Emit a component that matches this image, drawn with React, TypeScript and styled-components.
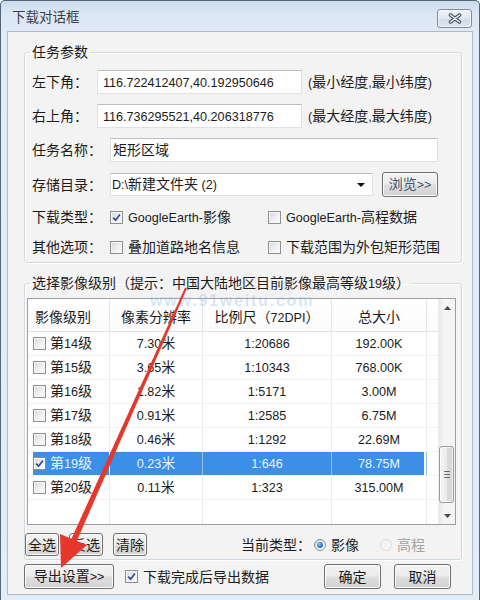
import React from 'react';
import styled, { createGlobalStyle } from 'styled-components';

const GlobalStyle = createGlobalStyle`
  html, body { margin: 0; padding: 0; background: #ffffff; }
  body {
    font-family: "Liberation Sans", "Noto Sans CJK SC", sans-serif;
    font-size: 14px;
    line-height: 18px;
    color: #1b1b1b;
  }
  *, *::before, *::after { box-sizing: border-box; }
`;

const LatinRun = styled.span`
  font-size: 0.9em;
`;

const MixedText = styled.span`
  white-space: pre;
`;

const Mixed: React.FC<{ text: string }> = ({ text }) => {
  const parts = text.split(/([\u0020-\u007e]+)/).filter((p) => p.length > 0);
  return (
    <MixedText>
      {parts.map((p, i) =>
        /^[\u0020-\u007e]+$/.test(p) ? (
          <LatinRun key={i}>{p}</LatinRun>
        ) : (
          <React.Fragment key={i}>{p}</React.Fragment>
        )
      )}
    </MixedText>
  );
};

/* ---------- window frame ---------- */

const Window = styled.div`
  position: relative;
  width: 480px;
  height: 600px;
  display: flex;
  flex-direction: column;
  padding: 0 6px 5px 6px;
  border: 1px solid #56667a;
  border-bottom: 0;
  border-radius: 5px 5px 0 0;
  background: linear-gradient(180deg, #cddcee 0px, #dce8f5 14px, #e1eaf5 30px, #e4ecf6 100%);
  overflow: hidden;
`;

const TitleBar = styled.div`
  height: 30px;
  flex: none;
  display: flex;
  align-items: flex-start;
  justify-content: space-between;
`;

const Title = styled.div`
  margin: 8px 0 0 5px;
  font-size: 13.5px;
  line-height: 18px;
  color: #3a3f47;
`;

const CloseButton = styled.div`
  width: 35px;
  height: 19px;
  margin: 8px 1px 0 0;
  display: flex;
  align-items: center;
  justify-content: center;
  border: 1px solid #7d8b9d;
  border-radius: 3px;
  background: linear-gradient(180deg, #eef3f9 0%, #dfe8f2 50%, #d0dce9 51%, #dce6f1 100%);
  box-shadow: inset 0 0 0 1px rgba(255, 255, 255, 0.6);
`;

const Client = styled.div`
  flex: 1;
  display: flex;
  flex-direction: column;
  border: 1px solid #aebdcd;
  background: #f3f3f3;
  padding: 0 10px 0 16px;
`;

/* ---------- group boxes ---------- */

const Group = styled.fieldset<{ $pad: string }>`
  margin: 11px 0 0 0;
  padding: ${(p) => p.$pad};
  border: 1px solid #d0dae2;
  border-radius: 3px;
  box-shadow: inset 1px 1px 0 #ffffff, 1px 1px 0 #ffffff;
  min-width: 0;
`;

const Legend = styled.legend<{ $ml: number }>`
  margin-left: ${(p) => p.$ml}px;
  padding: 0 2px;
  font-size: 14px;
  line-height: 18px;
  color: #1b1b1b;
  white-space: nowrap;
`;

const Rows = styled.div`
  display: flex;
  flex-direction: column;
  gap: 10px;
`;

const FieldRow = styled.div<{ $h: number }>`
  display: flex;
  align-items: center;
  height: ${(p) => p.$h}px;
`;

const Label = styled.div<{ $w: number }>`
  width: ${(p) => p.$w}px;
  flex: none;
  white-space: nowrap;
`;

const TextBox = styled.div<{ $w: number; $h: number; $pl: number }>`
  width: ${(p) => p.$w}px;
  height: ${(p) => p.$h}px;
  flex: none;
  display: flex;
  align-items: center;
  padding-left: ${(p) => p.$pl}px;
  background: #ffffff;
  border: 1px solid #dde2e8;
  border-top-color: #b9bec5;
  white-space: nowrap;
  overflow: hidden;
`;

const Hint = styled.div`
  margin-left: 6px;
  white-space: nowrap;
`;

const DropArrow = styled.span`
  margin-left: auto;
  margin-right: 7px;
  width: 0;
  height: 0;
  border-left: 4px solid transparent;
  border-right: 4px solid transparent;
  border-top: 4px solid #111;
`;

const Button = styled.div<{ $w: number; $h: number; $ml?: number; $tone?: string }>`
  width: ${(p) => p.$w}px;
  height: ${(p) => p.$h}px;
  margin-left: ${(p) => p.$ml ?? 0}px;
  flex: none;
  display: flex;
  align-items: center;
  justify-content: center;
  border: 1px solid #707070;
  border-radius: 3px;
  background: linear-gradient(180deg, #f4f4f4 0%, #ececec 48%, #dedede 52%, #d3d3d3 100%);
  box-shadow: inset 0 0 0 1px #fbfbfb;
  color: ${(p) => p.$tone ?? '#1b1b1b'};
  white-space: nowrap;
`;

const Option = styled.div<{ $w?: number; $ml?: number }>`
  display: flex;
  align-items: center;
  gap: 5px;
  width: ${(p) => (p.$w ? `${p.$w}px` : 'auto')};
  margin-left: ${(p) => p.$ml ?? 0}px;
  flex: none;
  white-space: nowrap;
`;

/* ---------- check box / radio ---------- */

const Box = styled.span`
  width: 13px;
  height: 13px;
  flex: none;
  display: inline-flex;
  align-items: center;
  justify-content: center;
  border: 1px solid #8e8f8f;
  background: linear-gradient(135deg, #d3d6db 0%, #eef0f2 55%, #fbfbfb 100%);
  box-shadow: inset 0 0 0 1px #f6f6f6;
`;

const CheckBox: React.FC<{ checked?: boolean }> = ({ checked }) => (
  <Box>
    {checked && (
      <svg width="9" height="9" viewBox="0 0 9 9">
        <path d="M1.2 4.6 L3.6 7.2 L7.9 1.4" stroke="#2f4f9a" strokeWidth="1.7" fill="none" strokeLinejoin="round" />
      </svg>
    )}
  </Box>
);

const RadioRing = styled.span<{ $disabled?: boolean }>`
  width: 12px;
  height: 12px;
  flex: none;
  border-radius: 50%;
  display: inline-flex;
  align-items: center;
  justify-content: center;
  border: 1px solid ${(p) => (p.$disabled ? '#dadcdf' : '#8e8f8f')};
  background: ${(p) =>
    p.$disabled ? '#f4f4f4' : 'linear-gradient(135deg, #d0d4d9 0%, #f0f1f3 60%, #ffffff 100%)'};
`;

const RadioDot = styled.span`
  width: 6px;
  height: 6px;
  border-radius: 50%;
  background: radial-gradient(circle at 35% 35%, #9cc8f5 0%, #3e86d8 45%, #1b4f9c 100%);
`;

const Radio: React.FC<{ checked?: boolean; disabled?: boolean }> = ({ checked, disabled }) => (
  <RadioRing $disabled={disabled}>{checked && <RadioDot />}</RadioRing>
);

const Dim = styled.span`
  color: #a4a4a4;
`;

/* ---------- list view ---------- */

const COLS = '82px 93px 129px 95px 1fr';

const List = styled.div`
  height: 227px;
  display: flex;
  border: 1px solid #9a9fa6;
  background: #ffffff;
`;

const Table = styled.div`
  flex: 1;
  min-width: 0;
  display: flex;
  flex-direction: column;
`;

const HeadRow = styled.div`
  display: grid;
  grid-template-columns: ${COLS};
  height: 33px;
  flex: none;
  border-bottom: 1px solid #e2e4e7;
  background: linear-gradient(180deg, #ffffff 0%, #fbfbfb 100%);
`;

const HeadCell = styled.div<{ $left?: boolean }>`
  display: flex;
  align-items: center;
  justify-content: ${(p) => (p.$left ? 'flex-start' : 'center')};
  padding: 4px 0 0 ${(p) => (p.$left ? 7 : 0)}px;
  border-right: 1px solid #e4e6e9;
  white-space: nowrap;
  &:last-child { border-right: 0; }
`;

const DataRow = styled.div<{ $sel?: boolean; $fill?: boolean }>`
  display: grid;
  grid-template-columns: ${COLS};
  height: ${(p) => (p.$fill ? 'auto' : '24px')};
  flex: ${(p) => (p.$fill ? 1 : 'none')};
  border-bottom: ${(p) => (p.$fill ? '0' : '1px solid #f2f2f2')};
  color: ${(p) => (p.$sel ? '#e9f3ff' : '#1b1b1b')};
  & > div:not(:last-child) {
    background: ${(p) => (p.$sel ? '#3b8fe6' : 'transparent')};
    border-right-color: ${(p) => (p.$sel ? 'rgba(255,255,255,0.45)' : '#ebebeb')};
  }
  & > div:first-child {
    background: ${(p) => (p.$sel ? 'linear-gradient(90deg, transparent 5px, #3b8fe6 5px)' : 'transparent')};
  }
  & > div:nth-child(4) {
    background: ${(p) => (p.$sel ? 'linear-gradient(90deg, #3b8fe6 calc(100% - 2px), transparent calc(100% - 2px))' : 'transparent')};
  }
`;

const Cell = styled.div<{ $left?: boolean }>`
  display: flex;
  align-items: center;
  justify-content: ${(p) => (p.$left ? 'flex-start' : 'center')};
  gap: 4px;
  padding-left: ${(p) => (p.$left ? 5 : 0)}px;
  border-right: 1px solid #ebebeb;
  white-space: nowrap;
  &:last-child { border-right: 0; }
`;

const ScrollBar = styled.div`
  width: 17px;
  flex: none;
  display: flex;
  flex-direction: column;
  border-left: 1px solid #ececec;
  background: linear-gradient(90deg, #e9e9e9 0%, #f5f5f5 35%, #f3f3f3 100%);
`;

const ScrollButton = styled.div`
  height: 17px;
  flex: none;
  display: flex;
  align-items: center;
  justify-content: center;
`;

const Track = styled.div`
  flex: 1;
  display: flex;
  flex-direction: column;
  padding: 0 1px 0 0;
`;

const Thumb = styled.div<{ $top: number; $h: number }>`
  margin-top: ${(p) => p.$top}px;
  height: ${(p) => p.$h}px;
  display: flex;
  align-items: center;
  justify-content: center;
  border: 1px solid #9b9b9b;
  border-radius: 3px;
  background: linear-gradient(90deg, #f6f6f6 0%, #ececec 50%, #dcdcdc 51%, #d6d6d6 100%);
  box-shadow: inset 0 0 0 1px rgba(255, 255, 255, 0.7);
`;

const ControlRow = styled.div`
  display: flex;
  align-items: center;
  height: 23px;
  margin: 8px 0 0 -2px;
`;

const BottomRow = styled.div`
  display: flex;
  align-items: center;
  height: 25px;
  margin-top: 4px;
  padding-right: 11px;
`;

const Spacer = styled.div`
  flex: 1;
`;

const Watermark = styled.span`
  position: absolute;
  left: 149px;
  top: 291px;
  font-family: "Liberation Sans", sans-serif;
  font-weight: bold;
  font-size: 16px;
  letter-spacing: 1.8px;
  color: rgba(130, 178, 224, 0.32);
  pointer-events: none;
`;

const Overlay = styled.svg`
  position: absolute;
  left: -1px;
  top: -1px;
  pointer-events: none;
`;

const levels = [
  { level: '第14级', res: '7.30米', scale: '1:20686', size: '192.00K' },
  { level: '第15级', res: '3.65米', scale: '1:10343', size: '768.00K' },
  { level: '第16级', res: '1.82米', scale: '1:5171', size: '3.00M' },
  { level: '第17级', res: '0.91米', scale: '1:2585', size: '6.75M' },
  { level: '第18级', res: '0.46米', scale: '1:1292', size: '22.69M' },
  { level: '第19级', res: '0.23米', scale: '1:646', size: '78.75M', checked: true },
  { level: '第20级', res: '0.11米', scale: '1:323', size: '315.00M' },
];

export default function App() {
  return (
    <>
      <GlobalStyle />
      <Window>
        <TitleBar>
          <Title>下载对话框</Title>
          <CloseButton>
            <svg width="14" height="11" viewBox="0 0 14 11">
              <path d="M2.5 2 L11.5 9 M11.5 2 L2.5 9" stroke="#4e5765" strokeWidth="3.6" strokeLinecap="round" />
              <path d="M2.5 2 L11.5 9 M11.5 2 L2.5 9" stroke="#eef2f7" strokeWidth="1.4" strokeLinecap="round" />
            </svg>
          </CloseButton>
        </TitleBar>
        <Client>
          <Group $pad="9px 0 5px 7px">
            <Legend $ml={-2}>任务参数</Legend>
            <Rows>
              <FieldRow $h={24}>
                <Label $w={65}>左下角：</Label>
                <TextBox $w={205} $h={24} $pl={5}>
                  <Mixed text="116.722412407,40.192950646" />
                </TextBox>
                <Hint>
                  <Mixed text="(最小经度,最小纬度)" />
                </Hint>
              </FieldRow>
              <FieldRow $h={24}>
                <Label $w={65}>右上角：</Label>
                <TextBox $w={205} $h={24} $pl={5}>
                  <Mixed text="116.736295521,40.206318776" />
                </TextBox>
                <Hint>
                  <Mixed text="(最大经度,最大纬度)" />
                </Hint>
              </FieldRow>
              <FieldRow $h={24}>
                <Label $w={78}>任务名称：</Label>
                <TextBox $w={328} $h={24} $pl={2}>矩形区域</TextBox>
              </FieldRow>
              <FieldRow $h={25}>
                <Label $w={78}>存储目录：</Label>
                <TextBox $w={263} $h={23} $pl={1}>
                  <Mixed text="D:\新建文件夹 (2)" />
                  <DropArrow />
                </TextBox>
                <Button $w={56} $h={25} $ml={9} $tone="#3f5573">
                  <Mixed text="浏览>>" />
                </Button>
              </FieldRow>
              <FieldRow $h={20}>
                <Label $w={78}>下载类型：</Label>
                <Option $w={158}>
                  <CheckBox checked />
                  <Mixed text="GoogleEarth-影像" />
                </Option>
                <Option>
                  <CheckBox />
                  <Mixed text="GoogleEarth-高程数据" />
                </Option>
              </FieldRow>
              <FieldRow $h={20}>
                <Label $w={78}>其他选项：</Label>
                <Option $w={158}>
                  <CheckBox />
                  <span>叠加道路地名信息</span>
                </Option>
                <Option>
                  <CheckBox />
                  <span>下载范围为外包矩形范围</span>
                </Option>
              </FieldRow>
            </Rows>
          </Group>

          <Group $pad="5px 5px 3px 2px">
            <Legend $ml={3}>
              <Mixed text="选择影像级别（提示：中国大陆地区目前影像最高等级19级）" />
            </Legend>
            <List>
              <Table>
                <HeadRow>
                  <HeadCell $left>影像级别</HeadCell>
                  <HeadCell>像素分辨率</HeadCell>
                  <HeadCell>
                    <Mixed text="比例尺（72DPI）" />
                  </HeadCell>
                  <HeadCell>总大小</HeadCell>
                  <HeadCell />
                </HeadRow>
                {levels.map((r) => (
                  <DataRow key={r.level} $sel={r.checked}>
                    <Cell $left>
                      <CheckBox checked={r.checked} />
                      <Mixed text={r.level} />
                    </Cell>
                    <Cell>
                      <Mixed text={r.res} />
                    </Cell>
                    <Cell>
                      <Mixed text={r.scale} />
                    </Cell>
                    <Cell>
                      <Mixed text={r.size} />
                    </Cell>
                    <Cell />
                  </DataRow>
                ))}
                <DataRow $fill>
                  <Cell />
                  <Cell />
                  <Cell />
                  <Cell />
                  <Cell />
                </DataRow>
              </Table>
              <ScrollBar>
                <ScrollButton>
                  <svg width="7" height="4" viewBox="0 0 7 4">
                    <path d="M0 4 L3.5 0 L7 4 Z" fill="#4a4a4a" />
                  </svg>
                </ScrollButton>
                <Track>
                  <Thumb $top={130} $h={57}>
                    <svg width="6" height="7" viewBox="0 0 6 7">
                      <path d="M0 0.5 H6 M0 3.5 H6 M0 6.5 H6" stroke="#6c6c6c" strokeWidth="1" />
                    </svg>
                  </Thumb>
                </Track>
                <ScrollButton>
                  <svg width="7" height="4" viewBox="0 0 7 4">
                    <path d="M0 0 L3.5 4 L7 0 Z" fill="#4a4a4a" />
                  </svg>
                </ScrollButton>
              </ScrollBar>
            </List>
            <ControlRow>
              <Button $w={34} $h={23}>全选</Button>
              <Button $w={34} $h={23} $ml={10}>反选</Button>
              <Button $w={34} $h={23} $ml={10}>清除</Button>
              <Option $ml={94}>
                <span>当前类型：</span>
              </Option>
              <Option $ml={3}>
                <Radio checked />
                <span>影像</span>
              </Option>
              <Option $ml={21}>
                <Radio disabled />
                <Dim>高程</Dim>
              </Option>
            </ControlRow>
          </Group>

          <BottomRow>
            <Button $w={90} $h={25}>
              <Mixed text="导出设置>>" />
            </Button>
            <Option $ml={11}>
              <CheckBox checked />
              <span>下载完成后导出数据</span>
            </Option>
            <Spacer />
            <Button $w={57} $h={25}>确定</Button>
            <Button $w={57} $h={25} $ml={13}>取消</Button>
          </BottomRow>
        </Client>

        <Watermark>www.91weitu.com</Watermark>
        <Overlay width="480" height="600" viewBox="0 0 480 600">
          <polygon points="185.1,287.6 186.9,288.4 76.6,541.4 71.4,539.0" fill="#e5372b" />
          <polygon points="61,568 87,545 60,534" fill="#e5372b" />
        </Overlay>
      </Window>
    </>
  );
}
